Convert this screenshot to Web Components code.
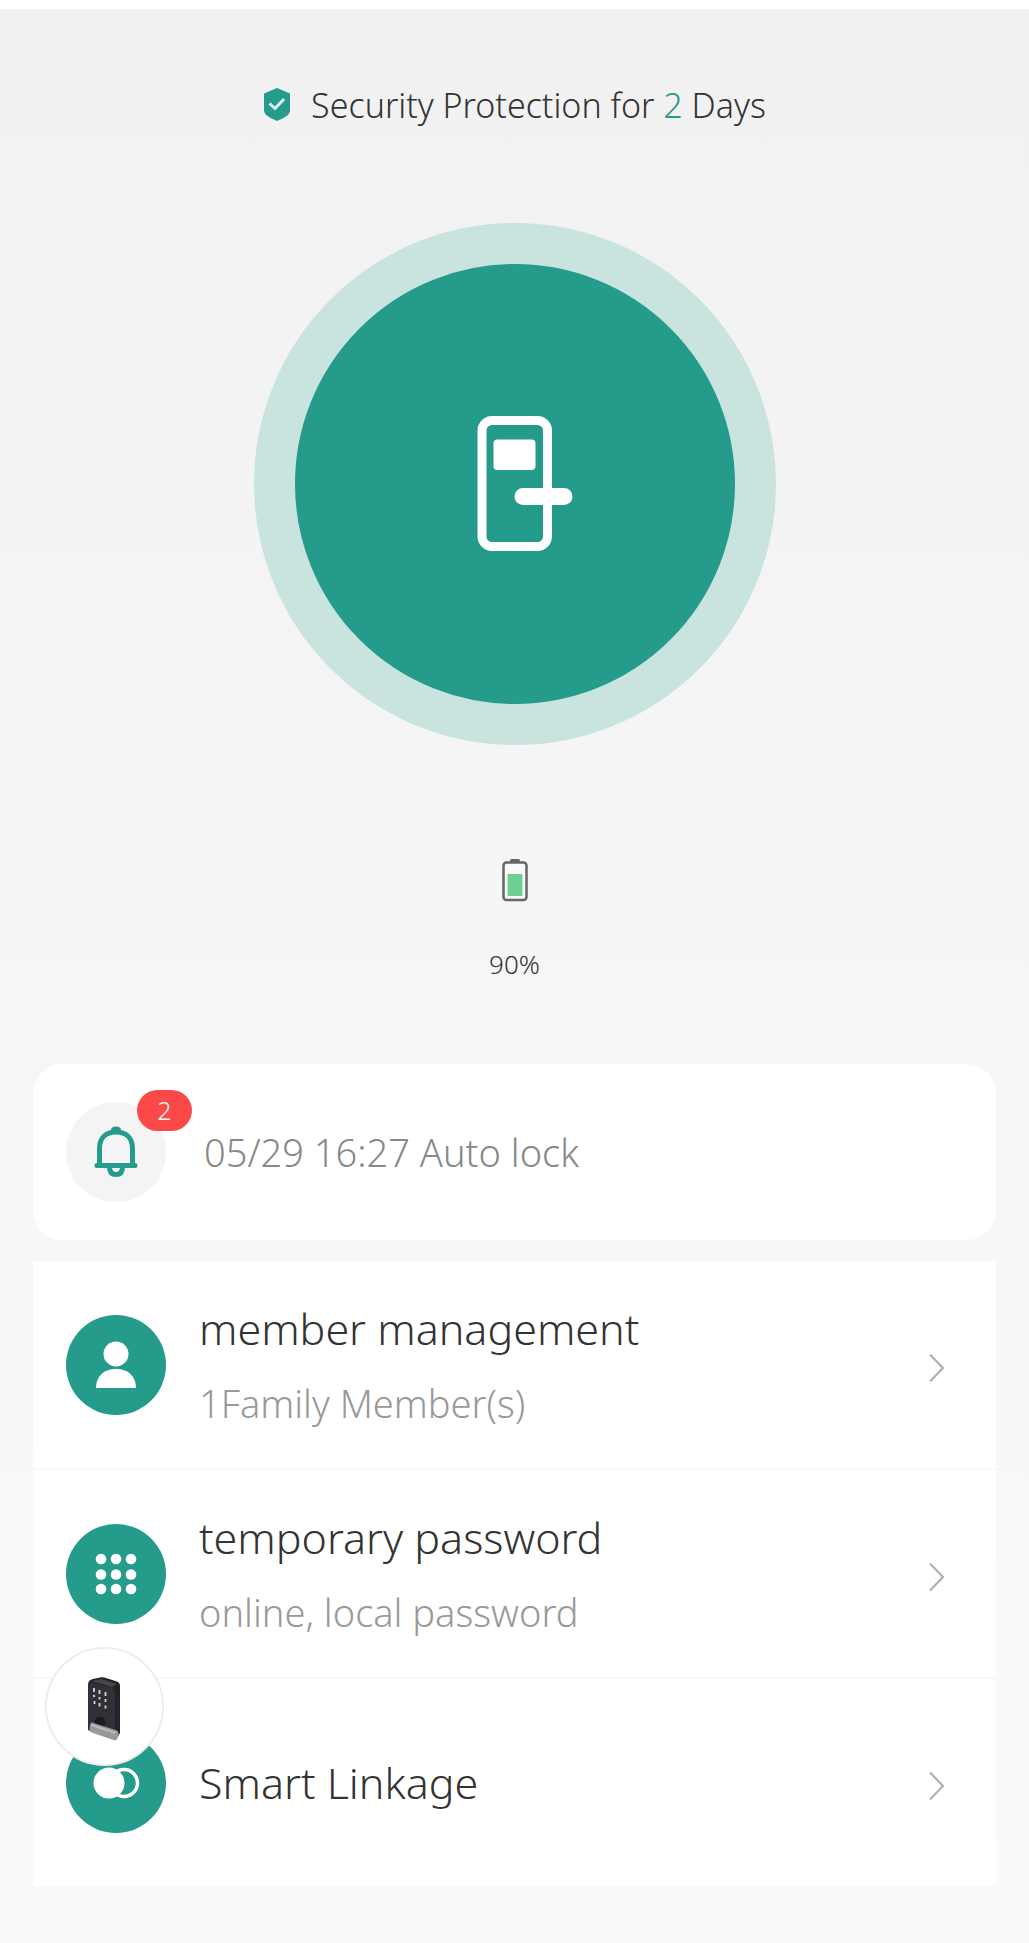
<!DOCTYPE html>
<html lang="en">
<head>
<meta charset="UTF-8">
<meta name="viewport" content="width=device-width, initial-scale=1">
<title>Smart Lock</title>
<style>
  body {
    margin: 0;
    background: #fff;
    color: #333;
    font-family: "Noto Sans", "Open Sans", sans-serif;
    font-weight: 350;
  }
</style>
</head>
<body>
<lock-page>
  <security-status slot="status" days="2"></security-status>
  <lock-button slot="lock"></lock-button>
  <battery-level slot="battery" level="90"></battery-level>
  <event-card slot="event" count="2">05/29 16:27 Auto lock</event-card>
  <menu-list slot="menu">
    <menu-row>
      <svg slot="icon" viewBox="0 0 100 100" aria-hidden="true">
        <circle cx="50" cy="39" r="12.5" fill="#fff"/>
        <path d="M30 73c0-12 8-19 20-19s20 7 20 19z" fill="#fff"/>
      </svg>
      member management
      <span slot="detail">1Family Member(s)</span>
    </menu-row>
    <menu-row>
      <svg slot="icon" viewBox="0 0 100 100" aria-hidden="true">
        <g fill="#fff">
          <circle cx="35" cy="35" r="5.3"/><circle cx="50" cy="35" r="5.3"/><circle cx="65" cy="35" r="5.3"/>
          <circle cx="35" cy="50.5" r="5.3"/><circle cx="50" cy="50.5" r="5.3"/><circle cx="65" cy="50.5" r="5.3"/>
          <circle cx="35" cy="65" r="5.3"/><circle cx="50" cy="65" r="5.3"/><circle cx="65" cy="65" r="5.3"/>
        </g>
      </svg>
      temporary password
      <span slot="detail">online, local password</span>
    </menu-row>
    <menu-row>
      <svg slot="icon" viewBox="0 0 100 100" aria-hidden="true">
        <circle cx="58" cy="50" r="13.5" fill="none" stroke="#fff" stroke-width="3.5"/>
        <circle cx="43" cy="50" r="15.5" fill="#fff"/>
      </svg>
      Smart Linkage
    </menu-row>
    <device-bubble slot="device"></device-bubble>
  </menu-list>
</lock-page>

<script>
class LockPage extends HTMLElement {
  constructor() {
    super();
    this.attachShadow({ mode: 'open' });
    this.shadowRoot.innerHTML = `
      <style>
        :host {
          display: flex;
          flex-direction: column;
          box-sizing: border-box;
          min-height: 100vh;
          padding: 0 33px 56px;
          border-top: 9px solid #fff;
          background: linear-gradient(#f1f1f1, #f6f6f6 50%, #fbfaf9);
        }
        main {
          display: flex;
          flex-direction: column;
        }
        .hero {
          display: flex;
          flex-direction: column;
          align-items: center;
          padding: 72px 0 80px;
        }
        ::slotted([slot="lock"]) { margin: 94px 0 113px; }
        ::slotted([slot="event"]) { margin-bottom: 21px; }
      </style>
      <main>
        <section class="hero">
          <slot name="status"></slot>
          <slot name="lock"></slot>
          <slot name="battery"></slot>
        </section>
        <slot name="event"></slot>
        <slot name="menu"></slot>
      </main>
    `;
  }
}

class SecurityStatus extends HTMLElement {
  constructor() {
    super();
    this.attachShadow({ mode: 'open' });
    this.shadowRoot.innerHTML = `
      <style>
        :host {
          display: flex;
          align-items: center;
          gap: 20px;
          font-size: 34px;
          line-height: 48px;
        }
        svg { width: 28px; height: 34px; }
        p { margin: 0; }
        b { color: #259b8c; font-weight: inherit; }
      </style>
      <svg viewBox="0 0 28 34" aria-hidden="true">
        <path d="M14 0l13 5.500v17c0 4.500-6 7.500-13 10.500C7 30 1 27 1 22.500v-17z" fill="#259b8c"/>
        <path d="M6.500 15.500l5.500 5 9-9.500" fill="none" stroke="#d8f5f0" stroke-width="3"/>
      </svg>
      <p>Security Protection for <b></b> Days</p>
    `;
  }

  connectedCallback() {
    this.shadowRoot.querySelector('b').textContent = this.getAttribute('days') || '0';
  }
}

class LockButton extends HTMLElement {
  constructor() {
    super();
    this.attachShadow({ mode: 'open' });
    this.shadowRoot.innerHTML = `
      <style>
        :host { display: block; }
        button {
          display: flex;
          align-items: center;
          justify-content: center;
          box-sizing: border-box;
          width: 522px;
          height: 522px;
          padding: 0;
          border: 41px solid #c9e3df;
          border-radius: 50%;
          background: #259b8c;
          cursor: pointer;
        }
        svg { width: 120px; height: 140px; }
      </style>
      <button type="button" aria-label="Unlock door">
        <svg viewBox="454 414 120 140" aria-hidden="true">
          <rect x="481" y="420.5" width="65.5" height="126" rx="10" fill="none" stroke="#fff" stroke-width="9"/>
          <rect x="492.5" y="439.5" width="42" height="30.5" rx="4" fill="#fff"/>
          <rect x="513.5" y="488" width="58" height="17" rx="8.5" fill="#fff"/>
        </svg>
      </button>
    `;
  }
}

class BatteryLevel extends HTMLElement {
  constructor() {
    super();
    this.attachShadow({ mode: 'open' });
    this.shadowRoot.innerHTML = `
      <style>
        :host {
          display: flex;
          flex-direction: column;
          align-items: center;
          gap: 42px;
          font-size: 26px;
          line-height: 40px;
        }
        svg { width: 26px; height: 44px; }
      </style>
      <svg viewBox="0 0 26 44" aria-hidden="true">
        <path d="M8 4V2.500Q8 1 9.500 1h7Q18 1 18 2.500V4z" fill="#666"/>
        <rect x="1.500" y="4.500" width="23" height="37.500" rx="3" fill="#fafafa" stroke="#666" stroke-width="2.500"/>
        <rect x="5.500" y="16" width="15" height="22" fill="#6dcf93"/>
      </svg>
      <span></span>
    `;
  }

  connectedCallback() {
    this.shadowRoot.querySelector('span').textContent = `${this.getAttribute('level')}%`;
  }
}

class EventCard extends HTMLElement {
  constructor() {
    super();
    this.attachShadow({ mode: 'open' });
    this.shadowRoot.innerHTML = `
      <style>
        :host {
          display: flex;
          align-items: center;
          gap: 38px;
          box-sizing: border-box;
          min-height: 176px;
          padding: 0 33px;
          border-radius: 30px;
          background: #fff;
          color: #888;
          font-size: 38px;
          line-height: 52px;
        }
        .bell {
          position: relative;
          display: flex;
          flex: none;
          width: 100px;
          height: 100px;
          border-radius: 50%;
          background: #f4f4f4;
        }
        svg { width: 100px; height: 100px; }
        .badge {
          position: absolute;
          top: -12px;
          right: -26px;
          width: 55px;
          border-radius: 21px;
          background: #fd4848;
          color: #fff;
          font-size: 25px;
          line-height: 41px;
          text-align: center;
        }
      </style>
      <div class="bell">
        <svg viewBox="0 0 100 100" fill="none" stroke="#259b8c" stroke-width="5" aria-hidden="true">
          <path d="M33.500 63.500V46.500C33.500 36 40 30 50 30s16.500 6 16.500 16.500v17z"/>
          <path d="M31 63.500h38" stroke-linecap="round"/>
          <path d="M45 31v-3q0-3.500 5-3.500t5 3.500v3z" fill="#259b8c" stroke="none"/>
          <path d="M43.500 65c0 5 2.500 7.500 6.500 7.500s6.500-2.500 6.500-7.500"/>
        </svg>
        <span class="badge"></span>
      </div>
      <span><slot></slot></span>
    `;
  }

  connectedCallback() {
    this.shadowRoot.querySelector('.badge').textContent = this.getAttribute('count');
  }
}

class MenuList extends HTMLElement {
  constructor() {
    super();
    this.attachShadow({ mode: 'open' });
    this.shadowRoot.innerHTML = `
      <style>
        :host {
          position: relative;
          display: flex;
          flex-direction: column;
          background: #fff;
        }
        ::slotted(menu-row:not(:first-child)) { border-top: 2px solid #f7f7f7; }
        ::slotted([slot="device"]) {
          position: absolute;
          left: 12px;
          bottom: 120px;
        }
      </style>
      <slot></slot>
      <slot name="device"></slot>
    `;
  }
}

class MenuRow extends HTMLElement {
  constructor() {
    super();
    this.attachShadow({ mode: 'open' });
    this.shadowRoot.innerHTML = `
      <style>
        :host { display: block; }
        a {
          display: flex;
          align-items: center;
          gap: 33px;
          box-sizing: border-box;
          min-height: 207px;
          padding: 0 51px 0 33px;
          color: inherit;
          text-decoration: none;
        }
        .icon {
          flex: none;
          width: 100px;
          height: 100px;
          border-radius: 50%;
          background: #259b8c;
        }
        .text {
          display: flex;
          flex: 1;
          flex-direction: column;
          gap: 20px;
          font-size: 43px;
          line-height: 56px;
        }
        ::slotted([slot="detail"]) {
          color: #999;
          font-size: 38px;
          line-height: 52px;
        }
        .arrow { width: 17px; height: 30px; padding-top: 6px; }
      </style>
      <a href="#">
        <span class="icon"><slot name="icon"></slot></span>
        <span class="text">
          <span><slot></slot></span>
          <slot name="detail"></slot>
        </span>
        <svg class="arrow" viewBox="0 0 17 30" aria-hidden="true">
          <path d="M2 1.500L15 15 2 28.500" fill="none" stroke="#b0b0b0" stroke-width="2.200"/>
        </svg>
      </a>
    `;
  }
}

class DeviceBubble extends HTMLElement {
  constructor() {
    super();
    this.attachShadow({ mode: 'open' });
    this.shadowRoot.innerHTML = `
      <style>
        :host { display: block; }
        button {
          display: block;
          box-sizing: border-box;
          width: 119px;
          height: 119px;
          padding: 0;
          border: 2px solid #ededed;
          border-radius: 50%;
          background: #fff;
          cursor: pointer;
        }
        svg { display: block; width: 115px; height: 115px; }
      </style>
      <button type="button" aria-label="Door lock device">
        <svg viewBox="47 1648 115 115" aria-hidden="true">
          <path d="M88 1684q0-5 5-6l7-1.500q3-.5 6 .5l11 3.500q3 1 3 4.500v47l-4 6-28-9z" fill="#222327"/>
          <path d="M88 1685q0-4 4-3.500l19 5q4 1 4 4.500v46l-27-8z" fill="#303136"/>
          <path d="M92 1680l9-2 16 5-5 3z" fill="#46474c"/>
          <g stroke="#d5d5da" stroke-width="1.800">
            <path d="M94 1687v4M99.500 1689v4M105.500 1691v4"/>
            <path d="M93.500 1694l1 2M99.500 1696v2.500M105.500 1698v3"/>
            <path d="M94.500 1700v3M99.500 1702v3.500M105.500 1704.500v3"/>
          </g>
          <circle cx="100" cy="1721" r="5.500" fill="#1c1c20"/>
          <path d="M92 1721.500l25 8q2 1 1.500 4l-1 4q-1 2.500-4 1.500l-22-7.500q-2-1-2-3.500l.5-4q.5-3 2-2.500z" fill="#97989b"/>
          <path d="M92 1723l24 8-1 2-24-8z" fill="#b9babd"/>
        </svg>
      </button>
    `;
  }
}

customElements.define('lock-page', LockPage);
customElements.define('security-status', SecurityStatus);
customElements.define('lock-button', LockButton);
customElements.define('battery-level', BatteryLevel);
customElements.define('event-card', EventCard);
customElements.define('menu-list', MenuList);
customElements.define('menu-row', MenuRow);
customElements.define('device-bubble', DeviceBubble);
</script>
</body>
</html>
